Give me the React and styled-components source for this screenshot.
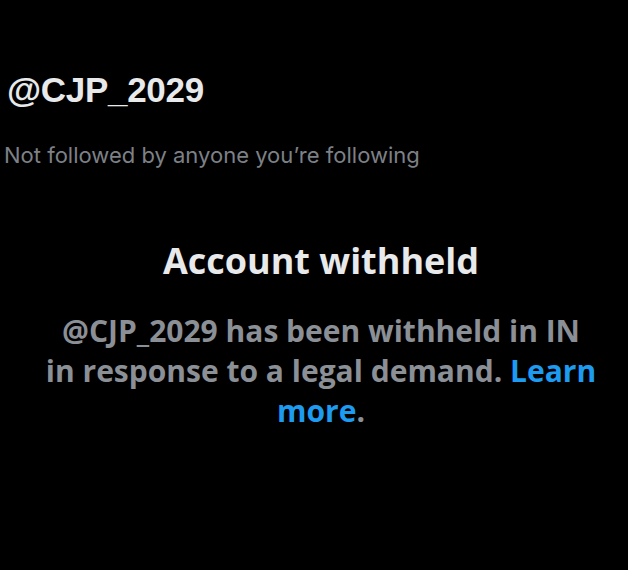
import styled, { createGlobalStyle } from 'styled-components';

const Global = createGlobalStyle`
	html, body {
		margin: 0;
		padding: 0;
		background: #000;
	}
`;

const Page = styled.div`
	width: 628px;
	height: 570px;
	background: #000;
	overflow: hidden;
	display: flex;
	flex-direction: column;
	font-family: 'Open Sans', 'Noto Sans', sans-serif;
`;

const Profile = styled.div`
	padding: 66px 0 0 7px;
	display: flex;
	flex-direction: column;
`;

const Handle = styled.h1`
	margin: 0;
	font-family: 'Liberation Sans', Arial, sans-serif;
	font-size: 35px;
	font-weight: 700;
	line-height: 48px;
	color: #e7e9ea;
	letter-spacing: -0.3px;
`;

const FollowNote = styled.p`
	margin: 27px 0 0 -3px;
	font-family: Inter, sans-serif;
	font-size: 22px;
	line-height: 28px;
	color: #7d8187;
`;

const Notice = styled.div`
	display: flex;
	flex-direction: column;
	align-items: center;
	text-align: center;
	padding: 70px 22px 0 36px;
`;

const Title = styled.h2`
	margin: 0;
	font-size: 36px;
	font-weight: 700;
	line-height: 44px;
	color: #e7e9ea;
`;

const Body = styled.p`
	margin: 28px 0 0;
	font-size: 30px;
	font-weight: 700;
	line-height: 40px;
	color: #8b8f96;
	white-space: nowrap;
`;

const Link = styled.a`
	color: #1d9bf0;
	text-decoration: none;
`;

export default function App() {
	return (
		<>
			<Global />
			<Page>
				<Profile>
					<Handle>@CJP_2029</Handle>
					<FollowNote>Not followed by anyone you’re following</FollowNote>
				</Profile>
				<Notice>
					<Title>Account withheld</Title>
					<Body>
						@CJP_2029 has been withheld in IN
						<br />
						in response to a legal demand. <Link href="#">Learn</Link>
						<br />
						<Link href="#">more</Link>.
					</Body>
				</Notice>
			</Page>
		</>
	);
}
